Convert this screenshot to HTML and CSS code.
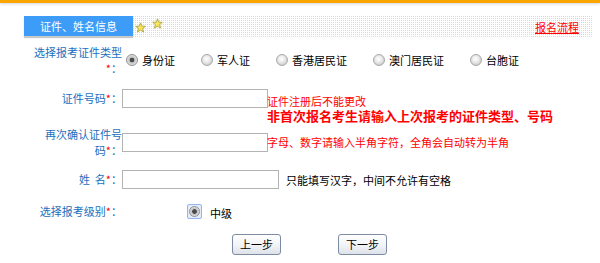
FILE: index.html
```html
<!DOCTYPE html>
<html lang="zh-CN">
<head>
<meta charset="utf-8">
<title>证件、姓名信息</title>
<link rel="stylesheet" href="styles.css">
</head>
<body>
<div class="topbar"></div>
<div class="header">
  <div class="tab">证件、姓名信息</div>
  <svg class="star star-a" viewBox="0 0 24 24"><polygon points="12,2 15,9 22.5,9.5 16.8,14.3 18.7,22 12,17.8 5.3,22 7.2,14.3 1.5,9.5 9,9"/></svg>
  <svg class="star star-b" viewBox="0 0 24 24"><polygon points="12,2 15,9 22.5,9.5 16.8,14.3 18.7,22 12,17.8 5.3,22 7.2,14.3 1.5,9.5 9,9"/></svg>
  <a class="flow" href="#">报名流程</a>
</div>
<form class="form">
  <div class="row row-type">
    <div class="label two">选择报考证件类型<br><span class="req">*</span>：</div>
    <div class="field radios">
      <label class="opt"><span class="radio checked"></span>身份证</label>
      <label class="opt"><span class="radio"></span>军人证</label>
      <label class="opt"><span class="radio"></span>香港居民证</label>
      <label class="opt"><span class="radio"></span>澳门居民证</label>
      <label class="opt"><span class="radio"></span>台胞证</label>
    </div>
  </div>
  <div class="row row-id">
    <div class="label one">证件号码<span class="req">*</span>：</div>
    <div class="field">
      <div class="line bottom">
        <input class="text" type="text"><span class="note">证件注册后不能更改</span>
      </div>
      <div class="warn">非首次报名考生请输入上次报考的证件类型、号码</div>
    </div>
  </div>
  <div class="row row-confirm">
    <div class="label two">再次确认证件号<br>码<span class="req">*</span>：</div>
    <div class="field line">
      <input class="text" type="text"><span class="note">字母、数字请输入半角字符，全角会自动转为半角</span>
    </div>
  </div>
  <div class="row row-name">
    <div class="label one">姓&nbsp;&nbsp;名<span class="req">*</span>：</div>
    <div class="field line">
      <input class="text wide" type="text"><span class="hint">只能填写汉字，中间不允许有空格</span>
    </div>
  </div>
  <div class="row row-level">
    <div class="label one">选择报考级别<span class="req">*</span>：</div>
    <div class="field level">
      <span class="focus"><span class="radio checked"></span></span><span class="opt-text">中级</span>
    </div>
  </div>
  <div class="row row-btns">
    <div class="label"></div>
    <div class="field btns">
      <button type="button" class="btn">上一步</button>
      <button type="button" class="btn">下一步</button>
    </div>
  </div>
</form>
</body>
</html>
```
FILE: styles.css
```css
html, body {
  margin: 0;
  padding: 0;
  background: #fff;
}
body {
  width: 600px;
  height: 263px;
  overflow: hidden;
  font-family: "Noto Sans CJK SC", "Noto Sans", sans-serif;
  font-size: 11px;
  color: #000;
}
.topbar {
  height: 3px;
  background: #f9a602;
  box-shadow: 0 1px 3px rgba(0,0,0,0.18);
}
.header {
  margin: 12px 0 0 24px;
  width: 568px;
  height: 22px;
  display: flex;
  align-items: flex-start;
  background-color: #fff;
  background-image:
    linear-gradient(90deg, #fff 1px, transparent 1px),
    linear-gradient(#fff 1px, #d9d9d9 1px);
  background-size: 2px 2px;
}
.tab {
  margin-top: 1px;
  width: 109px;
  height: 20px;
  line-height: 20px;
  text-align: center;
  color: #fff;
  background: #3d9cf8;
  box-shadow: 0 2px 1px #c9c9c9;
  letter-spacing: 0;
}
.star {
  display: block;
}
.star polygon {
  fill: #f5e55c;
  stroke: #a3962c;
  stroke-width: 1.6;
  stroke-linejoin: round;
}
.star-a {
  width: 11px;
  height: 11px;
  margin: 7px 0 0 2px;
}
.star-b {
  width: 11px;
  height: 11px;
  margin: 3px 0 0 6px;
}
.flow {
  margin-left: auto;
  margin-right: 13px;
  align-self: center;
  color: #f00;
  text-decoration: underline;
  line-height: 12px;
  margin-top: 1px;
}
.form {
  margin: 7px 0 0 0;
}
.row {
  display: flex;
}
.label {
  width: 122px;
  flex: none;
  text-align: right;
  color: #1c6fbd;
  box-sizing: border-box;
}
.label.two {
  line-height: 16px;
}
.label.one {
  line-height: 19px;
  height: 19px;
}
.req {
  color: #f00;
}
.field {
  flex: 1;
}
.row-type {
  height: 32px;
  align-items: center;
}
.radios {
  display: flex;
  align-items: center;
  gap: 26px;
  padding-left: 4px;
}
.opt {
  display: flex;
  align-items: center;
  gap: 4px;
  line-height: 14px;
}
.radio {
  display: block;
  width: 12px;
  height: 12px;
  border-radius: 50%;
  box-sizing: border-box;
  border: 1px solid #a9a9a9;
  background: radial-gradient(circle at 45% 40%, #ffffff 0, #ececec 3px, #cfcfcf 6px);
}
.radio.checked {
  border-color: #8f8f8f;
  background: radial-gradient(circle, #4a4a4a 0 2px, #bdbdbd 2.6px, #e6e6e6 5px);
}
.row-id {
  margin-top: 13px;
  align-items: flex-start;
}
.line {
  display: flex;
  align-items: center;
}
.line.bottom {
  align-items: flex-end;
}
.text {
  display: block;
  width: 146px;
  height: 19px;
  margin: 0;
  padding: 0 2px;
  box-sizing: border-box;
  border: 1px solid #b3b3b3;
  background: #fff;
  font: inherit;
}
.text.wide {
  width: 157px;
}
.note {
  color: #f00;
  line-height: 12px;
  white-space: nowrap;
  margin-left: -1px;
}
.line.bottom .note {
  line-height: 11px;
  margin-bottom: 1px;
}
.warn {
  margin-left: 145px;
  margin-top: 1px;
  color: #f00;
  font-weight: bold;
  font-size: 13px;
  line-height: 13px;
  white-space: nowrap;
}
.row-confirm {
  margin-top: 4px;
  height: 32px;
  align-items: center;
}
.row-name {
  margin-top: 12px;
  height: 19px;
  align-items: center;
}
.hint {
  margin-left: 7px;
  line-height: 14px;
  white-space: nowrap;
}
.row-level {
  margin-top: 14px;
  height: 16px;
  align-items: center;
}
.row-level .label.one {
  line-height: 16px;
  height: 16px;
}
.level {
  display: flex;
  align-items: center;
  padding-left: 65px;
}
.focus {
  display: block;
  padding: 1px;
  border: 1px solid #93b6ef;
  border-radius: 2px;
  background: #e3ecfb;
}
.focus .radio {
  width: 11px;
  height: 11px;
}
.opt-text {
  margin-left: 8px;
  line-height: 14px;
  margin-top: 3px;
}
.row-btns {
  margin-top: 15px;
}
.btns {
  display: flex;
  gap: 57px;
  padding-left: 110px;
}
.btn {
  width: 49px;
  height: 21px;
  padding: 0;
  margin: 0;
  border: 1px solid #7d8ca2;
  border-radius: 3px;
  background: linear-gradient(#ffffff, #f1f3f6 55%, #dde2e9);
  font-family: "Noto Sans CJK SC", "Noto Sans", sans-serif;
  font-size: 11px;
  line-height: 19px;
  color: #000;
}
```
